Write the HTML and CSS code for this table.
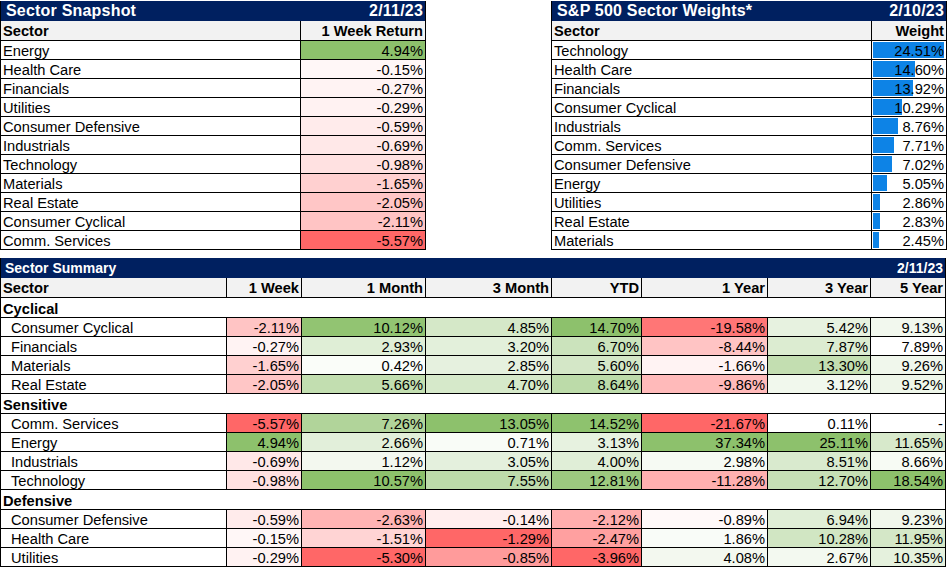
FILE: index.html
```html
<!DOCTYPE html>
<html lang="en">
<head>
<meta charset="utf-8">
<title>Sector Dashboard</title>
<link rel="stylesheet" href="styles.css">
</head>
<body>
<div class="top">
  <section class="tbl snap">
    <div class="title"><span>Sector Snapshot</span><span>2/11/23</span></div>
    <div class="hd">Sector</div><div class="hd num">1 Week Return</div>
    <div class="c">Energy</div><div class="c num" style="background:#8DC16C">4.94%</div>
    <div class="c">Health Care</div><div class="c num" style="background:#FFF7F7">-0.15%</div>
    <div class="c">Financials</div><div class="c num" style="background:#FFF3F3">-0.27%</div>
    <div class="c">Utilities</div><div class="c num" style="background:#FFF2F2">-0.29%</div>
    <div class="c">Consumer Defensive</div><div class="c num" style="background:#FFEBEB">-0.59%</div>
    <div class="c">Industrials</div><div class="c num" style="background:#FFE8E8">-0.69%</div>
    <div class="c">Technology</div><div class="c num" style="background:#FFE1E1">-0.98%</div>
    <div class="c">Materials</div><div class="c num" style="background:#FFD0D0">-1.65%</div>
    <div class="c">Real Estate</div><div class="c num" style="background:#FFC6C6">-2.05%</div>
    <div class="c">Consumer Cyclical</div><div class="c num" style="background:#FFC4C4">-2.11%</div>
    <div class="c">Comm. Services</div><div class="c num" style="background:#FF6767">-5.57%</div>
  </section>
  <section class="tbl weights">
    <div class="title"><span>S&amp;P 500 Sector Weights*</span><span>2/10/23</span></div>
    <div class="hd">Sector</div><div class="hd num">Weight</div>
    <div class="c">Technology</div><div class="c num bar" style="--w:71px">24.51%</div>
    <div class="c">Health Care</div><div class="c num bar" style="--w:42px">14.60%</div>
    <div class="c">Financials</div><div class="c num bar" style="--w:40px">13.92%</div>
    <div class="c">Consumer Cyclical</div><div class="c num bar" style="--w:29px">10.29%</div>
    <div class="c">Industrials</div><div class="c num bar" style="--w:25px">8.76%</div>
    <div class="c">Comm. Services</div><div class="c num bar" style="--w:21px">7.71%</div>
    <div class="c">Consumer Defensive</div><div class="c num bar" style="--w:19px">7.02%</div>
    <div class="c">Energy</div><div class="c num bar" style="--w:14px">5.05%</div>
    <div class="c">Utilities</div><div class="c num bar" style="--w:7px">2.86%</div>
    <div class="c">Real Estate</div><div class="c num bar" style="--w:7px">2.83%</div>
    <div class="c">Materials</div><div class="c num bar" style="--w:6px">2.45%</div>
  </section>
</div>

<section class="tbl summary">
  <div class="title"><span>Sector Summary</span><span>2/11/23</span></div>
  <div class="hd">Sector</div>
  <div class="hd num">1 Week</div>
  <div class="hd num">1 Month</div>
  <div class="hd num">3 Month</div>
  <div class="hd num">YTD</div>
  <div class="hd num">1 Year</div>
  <div class="hd num">3 Year</div>
  <div class="hd num">5 Year</div>

  <div class="grp">Cyclical</div>
  <div class="c ind">Consumer Cyclical</div>
  <div class="c num" style="background:#FFC4C4">-2.11%</div>
  <div class="c num" style="background:#92C472">10.12%</div>
  <div class="c num" style="background:#D5E8C8">4.85%</div>
  <div class="c num" style="background:#8DC16C">14.70%</div>
  <div class="c num" style="background:#FF7676">-19.58%</div>
  <div class="c num" style="background:#E7F2E0">5.42%</div>
  <div class="c num" style="background:#F2F8EE">9.13%</div>

  <div class="c ind">Financials</div>
  <div class="c num" style="background:#FFF3F3">-0.27%</div>
  <div class="c num" style="background:#DFEED6">2.93%</div>
  <div class="c num" style="background:#E3F0DB">3.20%</div>
  <div class="c num" style="background:#CBE3BC">6.70%</div>
  <div class="c num" style="background:#FFC4C4">-8.44%</div>
  <div class="c num" style="background:#DCECD1">7.87%</div>
  <div class="c num" style="background:#FFFFFF">7.89%</div>

  <div class="c ind">Materials</div>
  <div class="c num" style="background:#FFD0D0">-1.65%</div>
  <div class="c num" style="background:#FAFDF9">0.42%</div>
  <div class="c num" style="background:#E6F1DF">2.85%</div>
  <div class="c num" style="background:#D4E7C7">5.60%</div>
  <div class="c num" style="background:#FFF3F3">-1.66%</div>
  <div class="c num" style="background:#C3DEB1">13.30%</div>
  <div class="c num" style="background:#F0F7EC">9.26%</div>

  <div class="c ind">Real Estate</div>
  <div class="c num" style="background:#FFC6C6">-2.05%</div>
  <div class="c num" style="background:#C2DEB0">5.66%</div>
  <div class="c num" style="background:#D6E9CA">4.70%</div>
  <div class="c num" style="background:#BCDBA9">8.64%</div>
  <div class="c num" style="background:#FFBABA">-9.86%</div>
  <div class="c num" style="background:#F1F8ED">3.12%</div>
  <div class="c num" style="background:#EEF6E9">9.52%</div>

  <div class="grp">Sensitive</div>
  <div class="c ind">Comm. Services</div>
  <div class="c num" style="background:#FF6767">-5.57%</div>
  <div class="c num" style="background:#B1D49A">7.26%</div>
  <div class="c num" style="background:#8DC16C">13.05%</div>
  <div class="c num" style="background:#8EC26E">14.52%</div>
  <div class="c num" style="background:#FF6767">-21.67%</div>
  <div class="c num" style="background:#FFFFFF">0.11%</div>
  <div class="c num" style="background:#FFFFFF">-</div>

  <div class="c ind">Energy</div>
  <div class="c num" style="background:#8DC16C">4.94%</div>
  <div class="c num" style="background:#E2EFDA">2.66%</div>
  <div class="c num" style="background:#F9FCF7">0.71%</div>
  <div class="c num" style="background:#E7F2E0">3.13%</div>
  <div class="c num" style="background:#8DC16C">37.34%</div>
  <div class="c num" style="background:#8DC16C">25.11%</div>
  <div class="c num" style="background:#D7E9CB">11.65%</div>

  <div class="c ind">Industrials</div>
  <div class="c num" style="background:#FFE8E8">-0.69%</div>
  <div class="c num" style="background:#F3F8EF">1.12%</div>
  <div class="c num" style="background:#E4F0DD">3.05%</div>
  <div class="c num" style="background:#E0EED7">4.00%</div>
  <div class="c num" style="background:#F6FAF3">2.98%</div>
  <div class="c num" style="background:#D9EACE">8.51%</div>
  <div class="c num" style="background:#F7FBF4">8.66%</div>

  <div class="c ind">Technology</div>
  <div class="c num" style="background:#FFE1E1">-0.98%</div>
  <div class="c num" style="background:#8DC16C">10.57%</div>
  <div class="c num" style="background:#BDDBAA">7.55%</div>
  <div class="c num" style="background:#9CC97F">12.81%</div>
  <div class="c num" style="background:#FFB0B0">-11.28%</div>
  <div class="c num" style="background:#C6E0B5">12.70%</div>
  <div class="c num" style="background:#8DC16C">18.54%</div>

  <div class="grp">Defensive</div>
  <div class="c ind">Consumer Defensive</div>
  <div class="c num" style="background:#FFEBEB">-0.59%</div>
  <div class="c num" style="background:#FFB4B4">-2.63%</div>
  <div class="c num" style="background:#FFEEEE">-0.14%</div>
  <div class="c num" style="background:#FFAEAE">-2.12%</div>
  <div class="c num" style="background:#FFF9F9">-0.89%</div>
  <div class="c num" style="background:#E0EED7">6.94%</div>
  <div class="c num" style="background:#F1F7EC">9.23%</div>

  <div class="c ind">Health Care</div>
  <div class="c num" style="background:#FFF7F7">-0.15%</div>
  <div class="c num" style="background:#FFD4D4">-1.51%</div>
  <div class="c num" style="background:#FF6767">-1.29%</div>
  <div class="c num" style="background:#FFA0A0">-2.47%</div>
  <div class="c num" style="background:#F9FCF8">1.86%</div>
  <div class="c num" style="background:#D1E6C3">10.28%</div>
  <div class="c num" style="background:#D4E7C7">11.95%</div>

  <div class="c ind">Utilities</div>
  <div class="c num" style="background:#FFF2F2">-0.29%</div>
  <div class="c num" style="background:#FF6767">-5.30%</div>
  <div class="c num" style="background:#FF9B9B">-0.85%</div>
  <div class="c num" style="background:#FF6767">-3.96%</div>
  <div class="c num" style="background:#F3F8EF">4.08%</div>
  <div class="c num" style="background:#F3F9F0">2.67%</div>
  <div class="c num" style="background:#E5F1DD">10.35%</div>
</section>
</body>
</html>
```

FILE: styles.css
```css
* {
  box-sizing: border-box;
}

html, body {
  margin: 0;
  overflow: hidden;
}

body {
  width: 947px;
  padding-top: 1px;
  background: #ffffff;
  color: #000000;
  font-family: "Liberation Sans", Arial, sans-serif;
  font-size: 14.67px;
}

.top {
  display: flex;
  justify-content: space-between;
  align-items: flex-start;
}

.tbl {
  display: grid;
  border-left: 1px solid #000;
}

.snap {
  grid-template-columns: 300px 125px;
}

.weights {
  grid-template-columns: 320px 75px;
}

.summary {
  margin-top: 8px;
  grid-template-columns: 226px 75px 124px 126px 90px 126px 103px 75px;
}

.title {
  grid-column: 1 / -1;
  display: flex;
  justify-content: space-between;
  height: 20px;
  padding: 0 2px 0 5px;
  background: #002060;
  color: #ffffff;
  font-weight: bold;
  font-size: 16px;
  line-height: 20px;
  letter-spacing: 0.2px;
  white-space: nowrap;
  border-right: 1px solid #000;
}

.summary .title {
  font-size: 14px;
  padding-top: 1px;
  padding-left: 4px;
  line-height: 18px;
  letter-spacing: 0;
}

.hd {
  height: 20px;
  padding: 1px 2px 0 2px;
  background: #f2f2f2;
  font-weight: bold;
  line-height: 18px;
  white-space: nowrap;
  border-right: 1px solid #000;
  border-bottom: 1px solid #000;
}

.summary .hd {
  padding-top: 2px;
  line-height: 17px;
}

.c {
  height: 19px;
  padding: 2px 2px 0 2px;
  line-height: 16px;
  white-space: nowrap;
  overflow: hidden;
  border-right: 1px solid #000;
  border-bottom: 1px solid #000;
}

.num {
  text-align: right;
}

.ind {
  padding-left: 10px;
}

.grp {
  grid-column: 1 / -1;
  height: 20px;
  padding: 3px 2px 0 2px;
  font-weight: bold;
  line-height: 16px;
  border-right: 1px solid #000;
  border-bottom: 1px solid #000;
}

.bar {
  background: linear-gradient(#0d83e6, #0d83e6) no-repeat 1px 1px / var(--w) 16px;
}
```
